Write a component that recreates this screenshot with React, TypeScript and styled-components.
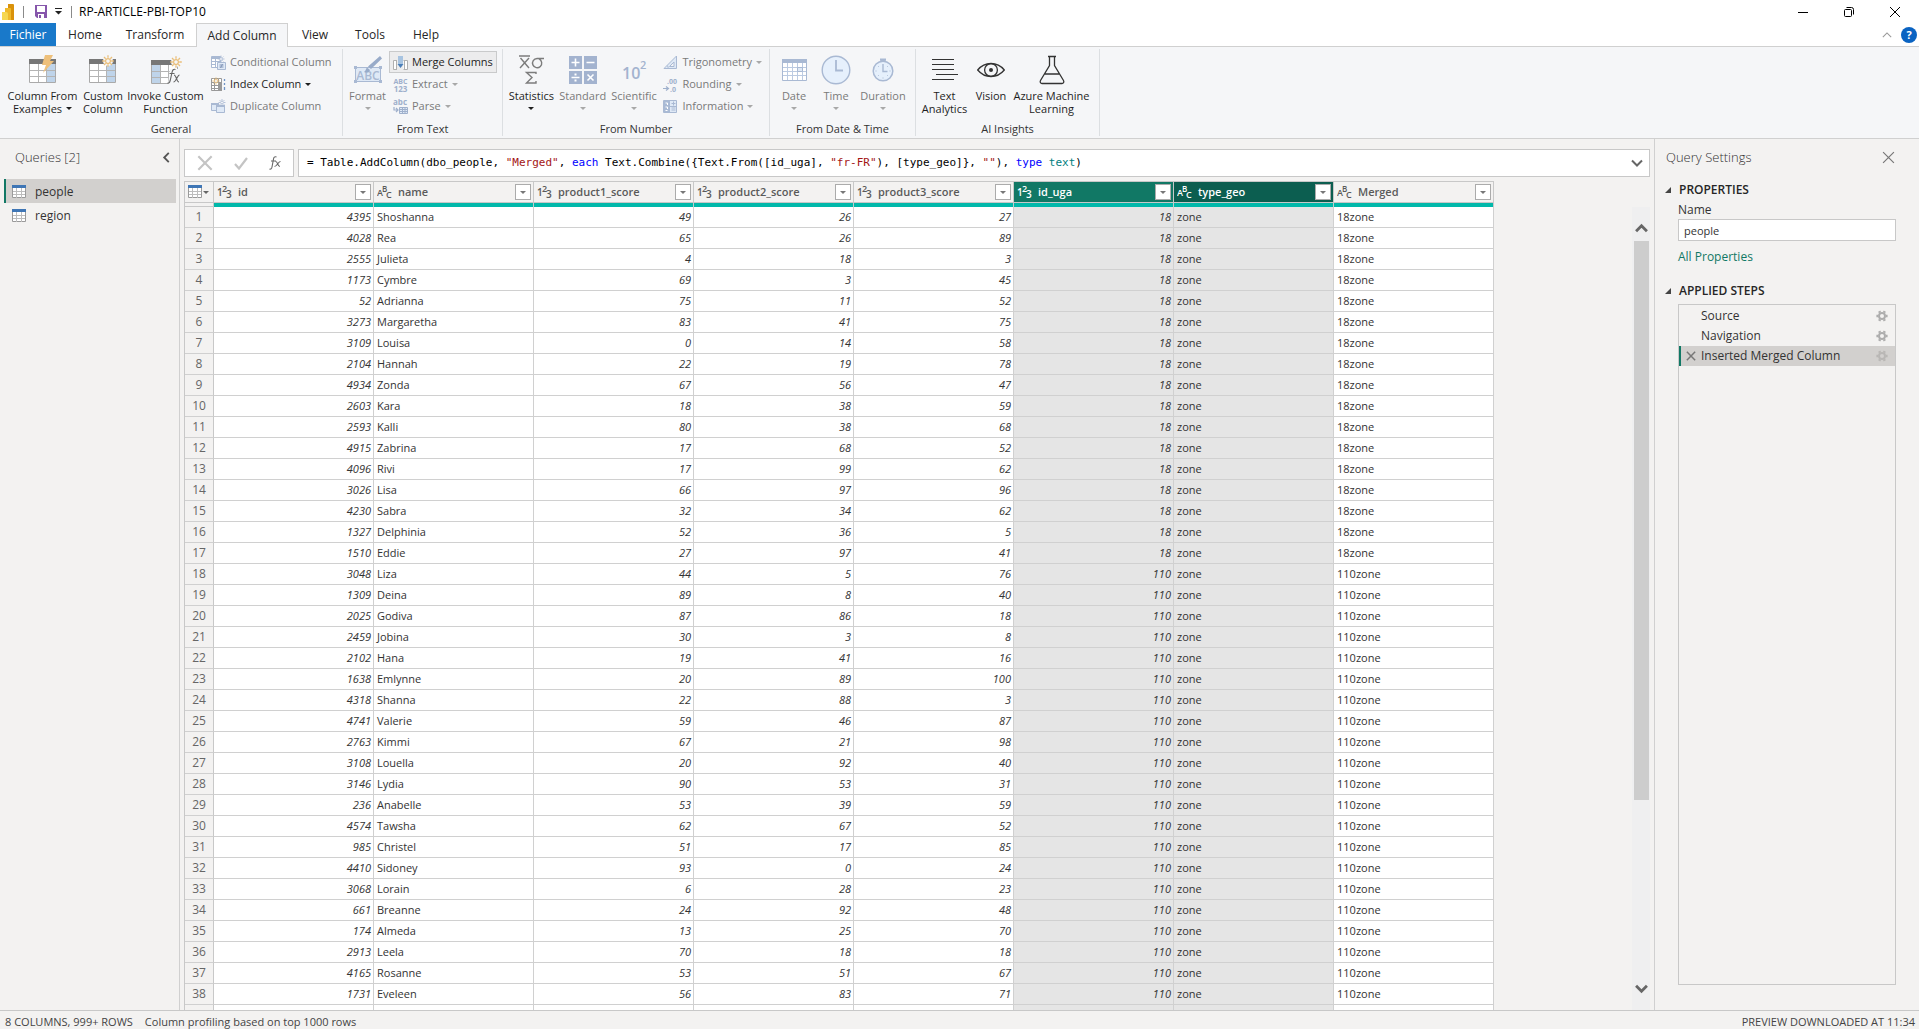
import React from 'react';
import styled, { createGlobalStyle, css } from 'styled-components';

const UI = `'Open Sans', 'Noto Sans', sans-serif`;
const MONO = `'DejaVu Sans Mono', 'Liberation Mono', monospace`;

const c = {
  panel: '#f3f2f1',
  ribbon: '#f5f6f8',
  line: '#d0d0d0',
  box: '#c8c8c8',
  text: '#333333',
  muted: '#7a7a7a',
  teal: '#01b8aa',
  green: '#117865',
  greenDark: '#0c5e50',
  pale: '#a9b9d3',
  paleFill: '#dfe9f6',
};

const Global = createGlobalStyle`
  *, *::before, *::after { box-sizing: border-box; }
  html, body { margin: 0; height: 100%; }
  body { font-family: ${UI}; font-size: 11px; color: ${c.text}; background: ${c.panel}; overflow: hidden; }
  button, input { font: inherit; color: inherit; }
  button { border: 0; padding: 0; background: none; cursor: default; }
  svg { display: block; flex: none; }
`;

const Page = styled.div`
  display: flex;
  flex-direction: column;
  height: 100vh;
`;

/* ---------- title bar ---------- */
const TitleBar = styled.header`
  display: flex;
  align-items: center;
  height: 23px;
  flex: none;
  padding: 0 1px 0 2px;
  background: #fff;
`;
const TitleSep = styled.span`
  width: 1px;
  height: 12px;
  background: #8a8a8a;
`;
const QuickAccess = styled.div`
  display: flex;
  align-items: center;
  gap: 8px;
  padding: 0 7px 0 9px;
`;
const QuickButtons = styled.div`
  display: flex;
  align-items: center;
  gap: 8px;
  padding-left: 3px;
`;
const Title = styled.h1`
  flex: 1;
  margin: 0;
  font-size: 12px;
  font-weight: 400;
  line-height: 16px;
  color: #000;
`;
const WindowButton = styled.button`
  display: flex;
  align-items: center;
  justify-content: center;
  width: 46px;
  height: 20px;
`;

/* ---------- tabs ---------- */
const TabBar = styled.nav`
  display: flex;
  align-items: stretch;
  height: 24px;
  flex: none;
  background: #fff;
  border-bottom: 1px solid ${c.line};
`;
const Tab = styled.button<{ $width: number; $kind?: 'file' | 'active' }>`
  width: ${(p) => p.$width}px;
  font-size: 12px;
  line-height: 16px;
  color: #262626;
  ${(p) => p.$kind === 'file' && css`background: #1979ca; color: #fff;`}
  ${(p) =>
    p.$kind === 'active' &&
    css`
      margin-bottom: -1px;
      background: ${c.ribbon};
      border: 1px solid ${c.line};
      border-bottom: 0;
    `}
`;
const TabTools = styled.div`
  display: flex;
  align-items: center;
  gap: 9px;
  margin-left: auto;
  padding-right: 2px;
`;

/* ---------- ribbon ---------- */
const Ribbon = styled.section`
  display: flex;
  height: 92px;
  flex: none;
  padding: 2px 0;
  background: ${c.ribbon};
  border-bottom: 1px solid ${c.line};
`;
const Group = styled.div<{ $width: number }>`
  display: flex;
  flex-direction: column;
  width: ${(p) => p.$width}px;
  border-right: 1px solid #dcdfe2;
`;
const GroupBody = styled.div`
  display: flex;
  height: 72px;
  padding: 2px 3px 0;
`;
const GroupName = styled.div`
  font-size: 11px;
  line-height: 15px;
  text-align: center;
`;
const BigButton = styled.button<{ $width: number; $off?: boolean }>`
  display: flex;
  flex-direction: column;
  align-items: center;
  width: ${(p) => p.$width}px;
  line-height: 13px;
  white-space: nowrap;
  color: ${(p) => (p.$off ? c.muted : '#1e1e1e')};
`;
const BigIcon = styled.span`
  display: flex;
  align-items: center;
  justify-content: center;
  height: 38px;
`;
const Line = styled.span`
  display: flex;
  align-items: center;
  gap: 4px;
  min-height: 13px;
`;
const SmallList = styled.div`
  display: flex;
  flex-direction: column;
  align-items: flex-start;
`;
const SmallButton = styled.button<{ $off?: boolean; $on?: boolean }>`
  display: flex;
  align-items: center;
  gap: 4px;
  height: 22px;
  padding: 0 3px;
  border: 1px solid ${(p) => (p.$on ? '#c9cacb' : 'transparent')};
  background: ${(p) => (p.$on ? '#ececed' : 'transparent')};
  line-height: 16px;
  white-space: nowrap;
  color: ${(p) => (p.$off ? c.muted : '#1e1e1e')};
`;
const Caret = styled.i<{ $color?: string }>`
  width: 0;
  height: 0;
  border: 3px solid transparent;
  border-bottom: 0;
  border-top-color: ${(p) => p.$color || '#1e1e1e'};
`;

/* ---------- main ---------- */
const Main = styled.main`
  display: flex;
  flex: 1;
  min-height: 0;
`;
const Sidebar = styled.aside`
  width: 180px;
  flex: none;
  border-right: 1px solid ${c.line};
`;
const PaneHead = styled.div`
  display: flex;
  align-items: center;
  justify-content: space-between;
  height: 36px;
  padding: 0 7px 0 15px;
`;
const PaneTitle = styled.h2`
  margin: 0;
  font-size: 13px;
  font-weight: 300;
  line-height: 18px;
  color: #333;
`;
const QueryList = styled.div`
  display: flex;
  flex-direction: column;
  padding: 4px 3px 0 4px;
`;
const Query = styled.button<{ $on?: boolean }>`
  display: flex;
  align-items: center;
  gap: 9px;
  height: 24px;
  padding: 1px 0 0 6px;
  border-left: 2px solid ${(p) => (p.$on ? c.green : 'transparent')};
  background: ${(p) => (p.$on ? '#d2d0ce' : 'transparent')};
  font-size: 12px;
  line-height: 16px;
`;
const Work = styled.section`
  display: flex;
  flex-direction: column;
  flex: 1;
  min-width: 0;
  padding: 10px 4px 0;
`;
const FormulaRow = styled.div`
  display: flex;
  gap: 4px;
  height: 28px;
  flex: none;
`;
const FormulaTools = styled.div`
  display: flex;
  align-items: center;
  justify-content: space-between;
  width: 110px;
  padding: 0 12px;
  background: #fff;
  border: 1px solid ${c.box};
`;
const FormulaBox = styled.div`
  display: flex;
  align-items: center;
  justify-content: space-between;
  flex: 1;
  min-width: 0;
  padding: 0 6px 0 8px;
  background: #fff;
  border: 1px solid ${c.box};
`;
const Formula = styled.div`
  font-family: ${MONO};
  font-size: 11px;
  line-height: 16px;
  white-space: pre;
  color: #000;
`;
const Token = styled.span<{ $color: string }>`
  color: ${(p) => p.$color};
`;

const GridArea = styled.div`
  display: flex;
  justify-content: space-between;
  flex: 1;
  min-height: 0;
  margin-top: 4px;
  overflow: hidden;
`;
const GridWrap = styled.div`
  flex: 1;
  min-width: 0;
  overflow: hidden;
`;
const Table = styled.table`
  width: 1310px;
  table-layout: fixed;
  border-collapse: separate;
  border-spacing: 0;
  border-top: 1px solid ${c.box};
  border-left: 1px solid ${c.box};
`;
const Col = styled.col<{ $width: number }>`
  width: ${(p) => p.$width}px;
`;
const HeadCell = styled.th<{ $bg?: string }>`
  height: 21px;
  padding: 0 2px 0 3px;
  border-right: 1px solid ${c.box};
  border-bottom: 1px solid ${c.box};
  background: ${(p) => p.$bg || c.panel};
  color: ${(p) => (p.$bg ? '#fff' : '#5a5a5a')};
  font-weight: 600;
  text-align: left;
`;
const HeadInner = styled.div`
  display: flex;
  align-items: center;
  gap: 1px;
  height: 20px;
`;
const HeadName = styled.span`
  flex: 1;
  padding-left: 5px;
  line-height: 16px;
`;
const Filter = styled.button`
  display: flex;
  align-items: center;
  justify-content: center;
  width: 16px;
  height: 16px;
  background: #fff;
  border: 1px solid #ababab;
`;
const QualityCell = styled.td<{ $corner?: boolean }>`
  height: 4px;
  padding: 0;
  border-right: 1px solid ${c.box};
  background: ${(p) => (p.$corner ? c.panel : c.teal)};
  ${(p) => p.$corner && css`border-bottom: 1px solid ${c.box};`}
`;
const RowHead = styled.th`
  height: 21px;
  padding: 0;
  border-right: 1px solid ${c.box};
  border-bottom: 1px solid ${c.line};
  background: ${c.panel};
  color: #666;
  font-size: 12px;
  font-weight: 400;
  line-height: 16px;
`;
const Cell = styled.td<{ $num?: boolean; $sel?: boolean }>`
  height: 21px;
  padding: 0 2px 0 3px;
  border-right: 1px solid ${c.line};
  border-bottom: 1px solid ${c.line};
  background: ${(p) => (p.$sel ? '#e5e5e5' : '#fff')};
  font-size: 11px;
  line-height: 16px;
  white-space: nowrap;
  ${(p) => p.$num && css`text-align: right; font-style: italic;`}
`;

const Scroll = styled.div`
  display: flex;
  flex-direction: column;
  width: 18px;
  flex: none;
  margin-top: 26px;
  background: #efeff0;
`;
const ScrollButton = styled.button<{ $down?: boolean }>`
  display: flex;
  align-items: center;
  justify-content: center;
  height: 34px;
  flex: none;
  padding: ${(p) => (p.$down ? '0 0 10px' : '8px 0 0')};
`;
const Track = styled.div`
  flex: 1;
  padding: 0 1px 0 2px;
`;
const Thumb = styled.div`
  height: 76%;
  background: #cdcdcd;
`;

/* ---------- settings pane ---------- */
const Settings = styled.aside`
  display: flex;
  flex-direction: column;
  width: 265px;
  flex: none;
  padding: 0 23px 25px 0;
  border-left: 1px solid ${c.line};
`;
const SettingsHead = styled(PaneHead)`
  flex: none;
  margin-bottom: 7px;
  padding: 0 1px 0 11px;
`;
const Section = styled.h3`
  display: flex;
  align-items: center;
  gap: 8px;
  margin: 0;
  padding-left: 10px;
  font-size: 12px;
  font-weight: 600;
  line-height: 16px;
  color: #262626;
`;
const Fields = styled.div`
  display: flex;
  flex-direction: column;
  align-items: stretch;
  padding: 4px 0 18px 23px;
  font-size: 12px;
  line-height: 16px;
`;
const NameInput = styled.input`
  width: 100%;
  height: 22px;
  margin: 1px 0 8px;
  padding: 0 5px;
  border: 1px solid ${c.box};
  background: #fff;
  font-size: 11px;
  outline: 0;
`;
const Link = styled.a`
  color: ${c.green};
  text-decoration: none;
`;
const Steps = styled.div`
  display: flex;
  flex-direction: column;
  flex: 1;
  margin: 5px 0 0 23px;
  padding-top: 1px;
  border: 1px solid ${c.box};
`;
const Step = styled.div<{ $on?: boolean }>`
  display: flex;
  align-items: center;
  height: 20px;
  padding-right: 7px;
  border-left: 2px solid ${(p) => (p.$on ? c.green : 'transparent')};
  background: ${(p) => (p.$on ? '#d2d0ce' : 'transparent')};
`;
const StepRemove = styled.button`
  display: flex;
  align-items: center;
  justify-content: center;
  width: 20px;
  height: 20px;
`;
const StepName = styled.button`
  flex: 1;
  text-align: left;
  font-size: 12px;
  line-height: 16px;
`;

/* ---------- status ---------- */
const Status = styled.footer`
  display: flex;
  align-items: center;
  gap: 12px;
  height: 19px;
  flex: none;
  padding: 4px 4px 0 5px;
  border-top: 1px solid ${c.box};
  line-height: 14px;
  color: #444;
`;
const StatusEnd = styled.span`
  margin-left: auto;
`;

/* ---------- icons ---------- */
const Star = ({ x, y, s = 1, color = '#eabf7a', bg = c.ribbon }: { x: number; y: number; s?: number; color?: string; bg?: string }) => (
  <g transform={`translate(${x} ${y}) scale(${s})`} stroke={color} strokeWidth="1.3" fill="none">
    <circle r="2.4" fill={bg} />
    <path d="M0-5.8V-3.2M0 5.8V3.2M-5.8 0H-3.2M5.8 0H3.2M-4-4-2.3-2.3M4-4 2.3-2.3M-4 4-2.3 2.3M4 4 2.3 2.3" />
  </g>
);

const TableBase = ({ shadeLeft }: { shadeLeft?: boolean }) => (
  <g>
    <path d="M1.5 4.500h26v23h-26z" fill="#fff" stroke="#aaa" />
    <path d={shadeLeft ? 'M2 9h8v18H2z' : 'M19 9h8v18h-8z'} fill="#bfd4ea" />
    <path d="M2 15.500h25M2 21.500h25M10.500 9v18M18.500 9v18" stroke="#b4b4b4" fill="none" />
    <path d="M1 4h27v5H1z" fill="#777" />
  </g>
);

const ExamplesIcon = () => (
  <svg width="30" height="30" viewBox="0 0 30 30">
    <TableBase />
    <path d="M17 0h8l-3 6h4L15 18l3-8h-4z" fill="#eec07b" />
  </svg>
);
const CustomIcon = () => (
  <svg width="30" height="30" viewBox="0 0 30 30">
    <TableBase />
    <circle cx="20" cy="6" r="5" fill={c.ribbon} />
    <Star x={20} y={6} />
  </svg>
);
const InvokeIcon = () => (
  <svg width="32" height="30" viewBox="0 0 32 30">
    <g transform="translate(0 1)">
      <TableBase shadeLeft />
    </g>
    <path d="M20 14h12v16H18z" fill={c.ribbon} />
    <circle cx="26" cy="7" r="5" fill={c.ribbon} />
    <Star x={26} y={7} />
    <path d="M25.500 14.500c-2-.8-3 .5-3.500 3l-1.800 8c-.5 2-1.300 3-2.700 2.500M19.500 18.500h5M24 20c2.500 0 2.300 7 5 7M29.500 20c-2 0-3.500 7-6 7" fill="none" stroke="#666" strokeWidth="1.100" />
  </svg>
);
const ConditionalIcon = () => (
  <svg width="15" height="15" viewBox="0 0 15 15">
    <path d="M.5 1.500h9v11h-9z" fill="#fff" stroke={c.pale} />
    <path d="M1 2h8v2H1z" fill={c.pale} />
    <path d="M4.500 4v8M1 6.500h8M1 9.500h4" stroke={c.pale} />
    <Star x={10} y={4} s={0.6} color="#a3b4d0" />
    <path d="M6.500 7.500h8v7h-8z" fill={c.paleFill} stroke={c.pale} />
    <path d="M8.500 10h4M8.500 12h4M11.500 9l-2 4" stroke="#8195b8" />
  </svg>
);
const IndexIcon = () => (
  <svg width="15" height="15" viewBox="0 0 15 15">
    <path d="M.5 1.500h10v12H.5z" fill="#fff" stroke="#999" />
    <path d="M1 5.500h9M1 8.500h9M1 11.500h9M3.500 2v11M7.500 2v11" stroke="#999" />
    <path d="M8 5h3v9H8z" fill="#999" />
    <Star x={5} y={4} s={0.65} />
    <path d="M13.500 2v2M13.500 6v2M13.500 10v3" stroke="#6f93c4" strokeWidth="1.300" />
  </svg>
);
const DuplicateIcon = () => (
  <svg width="15" height="15" viewBox="0 0 15 15">
    <path d="M.5 4.500h7v7h-7z" fill={c.paleFill} stroke={c.pale} />
    <path d="M5.500 6.500h8v7h-8z" fill={c.paleFill} stroke={c.pale} />
    <path d="M0 4h8v2H0zM5 6h9v2H5z" fill={c.pale} />
    <Star x={11} y={3.500} s={0.6} color="#a3b4d0" />
  </svg>
);
const FormatIcon = () => (
  <svg width="30" height="30" viewBox="0 0 30 30">
    <path d="M2.500 12.500h25v14h-25z" fill={c.paleFill} stroke={c.pale} />
    <path d="M1 11h3v3H1zM26 11h3v3h-3zM1 25h3v3H1zM26 25h3v3h-3z" fill={c.pale} />
    <text x="15" y="24.500" textAnchor="middle" fontSize="12" fontWeight="600" fontFamily={UI} fill={c.pale}>ABC</text>
    <path d="m27 1 2 2.500L18 14l-3-2.500zM14 12.500l3 2.500c-1 3-4 3-6 2 2-1 1.500-3 3-4.500z" fill="#98abc9" />
  </svg>
);
const MergeIcon = () => (
  <svg width="15" height="15" viewBox="0 0 15 15">
    <path d="M4 5.500H.5v9h3.500M10.500 5.500h4v9h-4M3.500 6v8M11.500 6v8" fill="#fff" stroke="#b0b0b0" />
    <path d="M5 1h5v8H5z" fill="#a7c3e0" />
    <path d="M4.500 9h6L7.500 13z" fill="#4c7fb8" />
  </svg>
);
const Letters = ({ a, b }: { a: string; b: string }) => (
  <svg width="15" height="15" viewBox="0 0 15 15">
    <text x="7.500" y="6.500" textAnchor="middle" fontSize="7" fontWeight="700" fontFamily={UI} fill="#9fb0cc">{a}</text>
    <text x="7.500" y="14.500" textAnchor="middle" fontSize="8" fontWeight="700" fontFamily={UI} fill="#9fb0cc">{b}</text>
  </svg>
);
const ParseIcon = () => (
  <svg width="15" height="15" viewBox="0 0 15 15">
    <text x="7" y="6" textAnchor="middle" fontSize="8" fontWeight="700" fontFamily={UI} fill="#9fb0cc">abc</text>
    <path d="M1 8v3h4M3 9l2 2-2 2" fill="none" stroke="#9fb0cc" strokeWidth="1.200" />
    <path d="M6.500 8.500h8v6h-8zM6.500 10.500h8M6.500 12.500h8M9.500 8v6M12 8v6" fill={c.paleFill} stroke="#9fb0cc" />
  </svg>
);
const StatisticsIcon = () => (
  <svg width="28" height="30" viewBox="0 0 28 30" fill="none" stroke="#7c7c7c" strokeWidth="1.400">
    <path d="M2 1h11M3.500 3l8.500 10M12 3 3 13M27 3.500h-7M20 3.500a4.600 4.600 0 1 0 2 .4" />
    <path d="M19 19v-1.500H9.500l5.500 5-5.500 5.500H19V26" />
  </svg>
);
const StandardIcon = () => (
  <svg width="28" height="30" viewBox="0 0 28 30">
    <path d="M0 1h13v13H0zM15 1h13v13H15zM0 16h13v13H0zM15 16h13v13H15z" fill="#a3b3cf" />
    <path d="M6.500 3.500v8M2.500 7.500h8M17.500 7.500h8M2.500 22.500h8M18.500 19.500l6 6M24.500 19.500l-6 6" stroke="#fff" strokeWidth="1.600" />
    <path d="M5.500 18.500h2v2h-2zM5.500 24.500h2v2h-2z" fill="#fff" />
  </svg>
);
const ScientificIcon = () => (
  <svg width="28" height="30" viewBox="0 0 28 30" fontFamily={UI} fontWeight="600" fill="#a3b3cf">
    <text x="2" y="24" fontSize="16">10</text>
    <text x="20" y="14" fontSize="11">2</text>
  </svg>
);
const TrigIcon = () => (
  <svg width="15" height="15" viewBox="0 0 15 15" fill="none" stroke={c.pale}>
    <path d="M1 13.500h12.500V1z" fill={c.paleFill} />
    <path d="M6.500 11.500h4.500V7z" fill={c.ribbon} />
    <path d="M4 10.500c1 .5 1.200 1.500 1 3" />
  </svg>
);
const RoundIcon = () => (
  <svg width="15" height="15" viewBox="0 0 15 15" fontFamily={UI} fontSize="7" fontWeight="700" fill="#9fb0cc">
    <text x="4" y="7">.00</text>
    <text x="7" y="14.500">.0</text>
    <path d="M0 11.500h5M3 9.500l2.500 2L3 13.500" stroke="#9fb0cc" strokeWidth="1.200" fill="none" />
  </svg>
);
const InfoIcon = () => (
  <svg width="15" height="15" viewBox="0 0 15 15">
    <path d="M.5 1.500h13v12H.5z" fill={c.paleFill} stroke={c.pale} />
    <path d="M1 2h6v11H1z" fill="#a9bad5" />
    <path d="M2.500 4h2v2M2.500 8h2v2M2.500 11.500h2" stroke="#fff" fill="none" />
    <path d="M8.500 4.500h4M10.500 2.500v4M8.500 9h4M8.500 11h4M7 7.500h7" stroke={c.pale} />
  </svg>
);
const DateIcon = () => (
  <svg width="26" height="30" viewBox="0 0 26 30">
    <path d="M1.500 4.500h24v21h-24z" fill="#fff" stroke={c.pale} />
    <path d="M1 4h25v4H1z" fill={c.pale} />
    <path d="M6.500 8v17M11.500 8v17M16.500 8v17M21.500 8v17M2 12.500h23M2 16.500h23M2 20.500h23" stroke="#bccbe2" />
    <path d="M16.500 12.500h5v4h-5z" fill={c.paleFill} stroke={c.pale} />
  </svg>
);
const TimeIcon = () => (
  <svg width="30" height="30" viewBox="0 0 30 30">
    <circle cx="15" cy="15" r="13.800" fill="#e6f0fc" stroke={c.pale} strokeWidth="1.400" />
    <path d="M15 5v10.500h7" fill="none" stroke={c.pale} strokeWidth="1.800" />
  </svg>
);
const DurationIcon = () => (
  <svg width="24" height="30" viewBox="0 0 24 30">
    <circle cx="12" cy="16" r="9.800" fill="#e6f0fc" stroke={c.pale} strokeWidth="1.500" />
    <path d="M9 3.500h6v2l-2 1.500h-2L9 5.500z" fill={c.pale} />
    <path d="M12 9v7.500h4.500" fill="none" stroke={c.pale} strokeWidth="1.400" />
    <path d="M4.500 16h1M18.500 16h1M12 22.500v1M7 11l.7.7M17 11l-.7.7M7 21l.7-.7M17 21l-.7-.7" stroke={c.pale} />
  </svg>
);
const TextIcon = () => (
  <svg width="28" height="30" viewBox="0 0 28 30" stroke="#333" fill="none">
    <path d="M1 4.500h22M1 9.500h22M1 14.500h22M5 19.500h22M1 24.500h22" />
  </svg>
);
const EyeIcon = () => (
  <svg width="28" height="30" viewBox="0 0 28 30" fill="none" stroke="#333" strokeWidth="1.300">
    <path d="M.7 15C4 11 9 8.500 14 8.500S24 11 27.300 15C24 19 19 21.500 14 21.500S4 19 .7 15z" />
    <circle cx="14" cy="15" r="6.400" />
    <circle cx="14" cy="15" r="2" fill="#333" stroke="none" />
  </svg>
);
const FlaskIcon = () => (
  <svg width="26" height="30" viewBox="0 0 26 30" fill="none" stroke="#333" strokeWidth="1.300">
    <path d="M9 1.500h8M10.500 1.500v9L1.500 25.500c-.8 1.500 0 3 1.500 3h20c1.500 0 2.300-1.500 1.500-3L15.500 10.500v-9M5.500 19h15" />
  </svg>
);
const SheetIcon = () => (
  <svg width="14" height="14" viewBox="0 0 14 14">
    <path d="M.5 1.500h13v11H.5z" fill="#fff" stroke="#9a9a9a" />
    <path d="M4.500 3v10M9.500 3v10M1 6.500h12M1 9.500h12" stroke="#bdbdbd" />
    <path d="M0 0h14v3H0z" fill="#3f76b5" />
  </svg>
);
const TypeIcon = ({ kind, color }: { kind: 'num' | 'text'; color: string }) => (
  <svg width="15" height="16" viewBox="0 0 15 16" fontFamily={UI} fontWeight="600" fill={color}>
    <text x="0" y="12" fontSize={kind === 'num' ? 10 : 9}>{kind === 'num' ? '1' : 'A'}</text>
    <text x="5" y="8" fontSize={kind === 'num' ? 9 : 8}>{kind === 'num' ? '2' : 'B'}</text>
    <text x="9" y="14" fontSize={kind === 'num' ? 10 : 9}>{kind === 'num' ? '3' : 'C'}</text>
  </svg>
);
const Gear = ({ off }: { off?: boolean }) => (
  <svg width="12" height="12" viewBox="0 0 12 12" fill="none" stroke={off ? '#b9b7b5' : '#adadad'}>
    <circle cx="6" cy="6" r="3" strokeWidth="2" />
    <path d="M10 6h1.600M.4 6H2M8 9.400l.8 1.500M4 9.400l-.8 1.500M8 2.600l.8-1.500M4 2.600l-.8-1.500" strokeWidth="2.400" />
  </svg>
);
const Cross = ({ size, color, w = 1 }: { size: number; color: string; w?: number }) => (
  <svg width={size} height={size} viewBox="0 0 12 12" fill="none" stroke={color} strokeWidth={w}>
    <path d="m1 1 10 10M11 1 1 11" />
  </svg>
);
const Chevron = ({ d, w = 12, color = '#666', sw = 2 }: { d: 'up' | 'down' | 'left'; w?: number; color?: string; sw?: number }) => {
  const paths = { up: 'M1 8.500 6 3.500l5 5', down: 'M1 3.500 6 8.500l5-5', left: 'M8.500 1 3.500 6l5 5' };
  return (
    <svg width={w} height={w} viewBox="0 0 12 12" fill="none" stroke={color} strokeWidth={sw}>
      <path d={paths[d]} />
    </svg>
  );
};
const Triangle = () => (
  <svg width="6" height="6" viewBox="0 0 6 6"><path d="M6 0v6H0z" fill="#444" /></svg>
);
const BiLogo = () => (
  <svg width="12" height="16" viewBox="0 0 12 16">
    <path d="M6 0h5a1 1 0 0 1 1 1v15H6z" fill="#d9920b" />
    <path d="M3 4h5a1 1 0 0 1 1 1v11H3z" fill="#efb92b" />
    <path d="M0 8h4a2 2 0 0 1 2 2v6H0z" fill="#f6d751" />
  </svg>
);
const SaveIcon = () => (
  <svg width="12" height="13" viewBox="0 0 12 13">
    <path d="M0 0h12v13H2l-2-2z" fill="#8656ab" />
    <path d="M2 1h8v6H2zM3 9h6v4H3z" fill="#fff" />
    <path d="M4 10h2v3H4z" fill="#8656ab" />
  </svg>
);

/* ---------- data ---------- */
type Small = { label: string; icon: React.ReactNode; off?: boolean; on?: boolean; caret?: boolean };
type Big = { lines: string[]; icon: React.ReactNode; width: number; off?: boolean; caret?: 'inline' | 'below' };
const groups: { name: string; width: number; big: Big[]; small: Small[] }[] = [
  {
    name: 'General',
    width: 343,
    big: [
      { lines: ['Column From', 'Examples'], icon: <ExamplesIcon />, width: 79, caret: 'inline' },
      { lines: ['Custom', 'Column'], icon: <CustomIcon />, width: 42 },
      { lines: ['Invoke Custom', 'Function'], icon: <InvokeIcon />, width: 83 },
    ],
    small: [
      { label: 'Conditional Column', icon: <ConditionalIcon />, off: true },
      { label: 'Index Column', icon: <IndexIcon />, caret: true },
      { label: 'Duplicate Column', icon: <DuplicateIcon />, off: true },
    ],
  },
  {
    name: 'From Text',
    width: 160,
    big: [{ lines: ['Format'], icon: <FormatIcon />, width: 43, off: true, caret: 'below' }],
    small: [
      { label: 'Merge Columns', icon: <MergeIcon />, on: true },
      { label: 'Extract', icon: <Letters a="ABC" b="123" />, off: true, caret: true },
      { label: 'Parse', icon: <ParseIcon />, off: true, caret: true },
    ],
  },
  {
    name: 'From Number',
    width: 267,
    big: [
      { lines: ['Statistics'], icon: <StatisticsIcon />, width: 51, caret: 'below' },
      { lines: ['Standard'], icon: <StandardIcon />, width: 52, off: true, caret: 'below' },
      { lines: ['Scientific'], icon: <ScientificIcon />, width: 51, off: true, caret: 'below' },
    ],
    small: [
      { label: 'Trigonometry', icon: <TrigIcon />, off: true, caret: true },
      { label: 'Rounding', icon: <RoundIcon />, off: true, caret: true },
      { label: 'Information', icon: <InfoIcon />, off: true, caret: true },
    ],
  },
  {
    name: 'From Date & Time',
    width: 146,
    big: [
      { lines: ['Date'], icon: <DateIcon />, width: 42, off: true, caret: 'below' },
      { lines: ['Time'], icon: <TimeIcon />, width: 42, off: true, caret: 'below' },
      { lines: ['Duration'], icon: <DurationIcon />, width: 52, off: true, caret: 'below' },
    ],
    small: [],
  },
  {
    name: 'AI Insights',
    width: 184,
    big: [
      { lines: ['Text', 'Analytics'], icon: <TextIcon />, width: 51 },
      { lines: ['Vision'], icon: <EyeIcon />, width: 42 },
      { lines: ['Azure Machine', 'Learning'], icon: <FlaskIcon />, width: 79 },
    ],
    small: [],
  },
];

const tabs: { name: string; width: number; kind?: 'file' | 'active' }[] = [
  { name: 'Fichier', width: 56, kind: 'file' },
  { name: 'Home', width: 58 },
  { name: 'Transform', width: 82 },
  { name: 'Add Column', width: 92, kind: 'active' },
  { name: 'View', width: 54 },
  { name: 'Tools', width: 56 },
  { name: 'Help', width: 56 },
];

const columns: { name: string; kind: 'num' | 'text'; bg?: string }[] = [
  { name: 'id', kind: 'num' },
  { name: 'name', kind: 'text' },
  { name: 'product1_score', kind: 'num' },
  { name: 'product2_score', kind: 'num' },
  { name: 'product3_score', kind: 'num' },
  { name: 'id_uga', kind: 'num', bg: c.green },
  { name: 'type_geo', kind: 'text', bg: c.greenDark },
  { name: 'Merged', kind: 'text' },
];

const people: [number, string, number, number, number][] = [
  [4395, 'Shoshanna', 49, 26, 27], [4028, 'Rea', 65, 26, 89], [2555, 'Julieta', 4, 18, 3],
  [1173, 'Cymbre', 69, 3, 45], [52, 'Adrianna', 75, 11, 52], [3273, 'Margaretha', 83, 41, 75],
  [3109, 'Louisa', 0, 14, 58], [2104, 'Hannah', 22, 19, 78], [4934, 'Zonda', 67, 56, 47],
  [2603, 'Kara', 18, 38, 59], [2593, 'Kalli', 80, 38, 68], [4915, 'Zabrina', 17, 68, 52],
  [4096, 'Rivi', 17, 99, 62], [3026, 'Lisa', 66, 97, 96], [4230, 'Sabra', 32, 34, 62],
  [1327, 'Delphinia', 52, 36, 5], [1510, 'Eddie', 27, 97, 41], [3048, 'Liza', 44, 5, 76],
  [1309, 'Deina', 89, 8, 40], [2025, 'Godiva', 87, 86, 18], [2459, 'Jobina', 30, 3, 8],
  [2102, 'Hana', 19, 41, 16], [1638, 'Emlynne', 20, 89, 100], [4318, 'Shanna', 22, 88, 3],
  [4741, 'Valerie', 59, 46, 87], [2763, 'Kimmi', 67, 21, 98], [3108, 'Louella', 20, 92, 40],
  [3146, 'Lydia', 90, 53, 31], [236, 'Anabelle', 53, 39, 59], [4574, 'Tawsha', 62, 67, 52],
  [985, 'Christel', 51, 17, 85], [4410, 'Sidoney', 93, 0, 24], [3068, 'Lorain', 6, 28, 23],
  [661, 'Breanne', 24, 92, 48], [174, 'Almeda', 13, 25, 70], [2913, 'Leela', 70, 18, 18],
  [4165, 'Rosanne', 53, 51, 67], [1731, 'Eveleen', 56, 83, 71],
];

const caretColor = (off?: boolean) => (off ? '#a8a8a8' : '#1e1e1e');

export default function App() {
  return (
    <Page>
      <Global />
      <TitleBar>
        <BiLogo />
        <QuickAccess>
          <TitleSep />
          <QuickButtons>
            <button aria-label="Save"><SaveIcon /></button>
            <button aria-label="Customize toolbar">
              <svg width="8" height="7" viewBox="0 0 8 7"><path d="M0 0h7v1H0zM0 3h7L3.500 6.500z" fill="#222" /></svg>
            </button>
          </QuickButtons>
          <TitleSep />
        </QuickAccess>
        <Title>RP-ARTICLE-PBI-TOP10</Title>
        <WindowButton aria-label="Minimize">
          <svg width="10" height="10" viewBox="0 0 10 10"><path d="M0 5.500h10" stroke="#000" /></svg>
        </WindowButton>
        <WindowButton aria-label="Restore">
          <svg width="10" height="10" viewBox="0 0 10 10" fill="none" stroke="#000">
            <rect x=".5" y="2.500" width="7" height="7" rx="1" />
            <path d="M2.500.5h5a2 2 0 0 1 2 2v5" />
          </svg>
        </WindowButton>
        <WindowButton aria-label="Close"><Cross size={12} color="#000" /></WindowButton>
      </TitleBar>

      <TabBar>
        {tabs.map((t) => (
          <Tab key={t.name} $width={t.width} $kind={t.kind}>{t.name}</Tab>
        ))}
        <TabTools>
          <button aria-label="Collapse ribbon"><Chevron d="up" w={10} color="#999" sw={1.3} /></button>
          <button aria-label="Help center">
            <svg width="16" height="16" viewBox="0 0 16 16">
              <circle cx="8" cy="8" r="8" fill="#0a63c2" />
              <text x="8" y="12" textAnchor="middle" fontSize="11" fontWeight="700" fontFamily={UI} fill="#fff">?</text>
            </svg>
          </button>
        </TabTools>
      </TabBar>

      <Ribbon>
        {groups.map((g) => (
          <Group key={g.name} $width={g.width}>
            <GroupBody>
              {g.big.map((b) => (
                <BigButton key={b.lines[0]} $width={b.width} $off={b.off}>
                  <BigIcon>{b.icon}</BigIcon>
                  {b.lines.map((l, i) => (
                    <Line key={l}>
                      {l}
                      {b.caret === 'inline' && i === b.lines.length - 1 && <Caret />}
                    </Line>
                  ))}
                  {b.caret === 'below' && <Line><Caret $color={caretColor(b.off)} /></Line>}
                </BigButton>
              ))}
              {g.small.length > 0 && (
                <SmallList>
                  {g.small.map((s) => (
                    <SmallButton key={s.label} $off={s.off} $on={s.on}>
                      {s.icon}
                      {s.label}
                      {s.caret && <Caret $color={caretColor(s.off)} />}
                    </SmallButton>
                  ))}
                </SmallList>
              )}
            </GroupBody>
            <GroupName>{g.name}</GroupName>
          </Group>
        ))}
      </Ribbon>

      <Main>
        <Sidebar>
          <PaneHead>
            <PaneTitle>Queries [2]</PaneTitle>
            <button aria-label="Collapse queries"><Chevron d="left" w={11} color="#555" /></button>
          </PaneHead>
          <QueryList>
            <Query $on><SheetIcon />people</Query>
            <Query><SheetIcon />region</Query>
          </QueryList>
        </Sidebar>

        <Work>
          <FormulaRow>
            <FormulaTools>
              <button aria-label="Cancel"><Cross size={16} color="#c4c4c4" w={1.6} /></button>
              <button aria-label="Commit">
                <svg width="14" height="13" viewBox="0 0 14 13" fill="none" stroke="#c4c4c4" strokeWidth="2.200"><path d="m1 7 4 4.500L13 1" /></svg>
              </button>
              <button aria-label="Insert function">
                <svg width="12" height="14" viewBox="0 0 12 14" fill="none" stroke="#666" strokeWidth="1.100">
                  <path d="M7.500 1C5.500.3 4.800 1.500 4.500 3L3 11c-.3 1.800-1.200 2.500-2.500 2M2 5h5M6.500 5.500C9 5 8 10.500 11 10.500M11.500 5.500C9.500 5 8 10.500 5.500 10.500" />
                </svg>
              </button>
            </FormulaTools>
            <FormulaBox>
              <Formula role="textbox" aria-label="Formula" contentEditable suppressContentEditableWarning spellCheck={false}>
                {'= Table.AddColumn(dbo_people, '}
                <Token $color="#a31515">"Merged"</Token>
                {', '}
                <Token $color="#0000ff">each</Token>
                {' Text.Combine({Text.From([id_uga], '}
                <Token $color="#a31515">"fr-FR"</Token>
                {'), [type_geo]}, '}
                <Token $color="#a31515">""</Token>
                {'), '}
                <Token $color="#0000ff">type</Token>{' '}
                <Token $color="#008080">text</Token>
                {')'}
              </Formula>
              <button aria-label="Expand formula"><Chevron d="down" w={12} /></button>
            </FormulaBox>
          </FormulaRow>

          <GridArea>
            <GridWrap>
              <Table>
                <colgroup>
                  <Col $width={29} />
                  {columns.map((col) => <Col key={col.name} $width={160} />)}
                </colgroup>
                <thead>
                  <tr>
                    <HeadCell>
                      <HeadInner>
                        <SheetIcon />
                        <Caret $color="#666" />
                      </HeadInner>
                    </HeadCell>
                    {columns.map((col) => (
                      <HeadCell key={col.name} scope="col" $bg={col.bg}>
                        <HeadInner>
                          <TypeIcon kind={col.kind} color={col.bg ? '#fff' : '#5a5a5a'} />
                          <HeadName>{col.name}</HeadName>
                          <Filter aria-label={`Filter ${col.name}`}><Caret $color="#777" /></Filter>
                        </HeadInner>
                      </HeadCell>
                    ))}
                  </tr>
                </thead>
                <tbody>
                  <tr>
                    <QualityCell $corner />
                    {columns.map((col) => <QualityCell key={col.name} />)}
                  </tr>
                  {people.map(([id, name, p1, p2, p3], i) => {
                    const uga = i < 17 ? 18 : 110;
                    return (
                      <tr key={id}>
                        <RowHead scope="row">{i + 1}</RowHead>
                        <Cell $num>{id}</Cell>
                        <Cell>{name}</Cell>
                        <Cell $num>{p1}</Cell>
                        <Cell $num>{p2}</Cell>
                        <Cell $num>{p3}</Cell>
                        <Cell $num $sel>{uga}</Cell>
                        <Cell $sel>zone</Cell>
                        <Cell>{uga}zone</Cell>
                      </tr>
                    );
                  })}
                  <tr>
                    <RowHead />
                    {columns.map((col) => <Cell key={col.name} $sel={!!col.bg} />)}
                  </tr>
                </tbody>
              </Table>
            </GridWrap>
            <Scroll>
              <ScrollButton aria-label="Scroll up"><Chevron d="up" w={13} sw={2.6} /></ScrollButton>
              <Track><Thumb /></Track>
              <ScrollButton $down aria-label="Scroll down"><Chevron d="down" w={13} sw={2.6} /></ScrollButton>
            </Scroll>
          </GridArea>
        </Work>

        <Settings>
          <SettingsHead>
            <PaneTitle>Query Settings</PaneTitle>
            <button aria-label="Close settings"><Cross size={13} color="#777" w={1.1} /></button>
          </SettingsHead>
          <Section><Triangle />PROPERTIES</Section>
          <Fields>
            <label htmlFor="query-name">Name</label>
            <NameInput id="query-name" defaultValue="people" />
            <Link href="#properties">All Properties</Link>
          </Fields>
          <Section><Triangle />APPLIED STEPS</Section>
          <Steps>
            {['Source', 'Navigation', 'Inserted Merged Column'].map((s, i) => (
              <Step key={s} $on={i === 2}>
                <StepRemove aria-label={`Remove ${s}`}>{i === 2 && <Cross size={10} color="#777" w={1.8} />}</StepRemove>
                <StepName>{s}</StepName>
                <button aria-label={`Settings for ${s}`}><Gear off={i === 2} /></button>
              </Step>
            ))}
          </Steps>
        </Settings>
      </Main>

      <Status>
        <span>8 COLUMNS, 999+ ROWS</span>
        <span>Column profiling based on top 1000 rows</span>
        <StatusEnd>PREVIEW DOWNLOADED AT 11:34</StatusEnd>
      </Status>
    </Page>
  );
}
